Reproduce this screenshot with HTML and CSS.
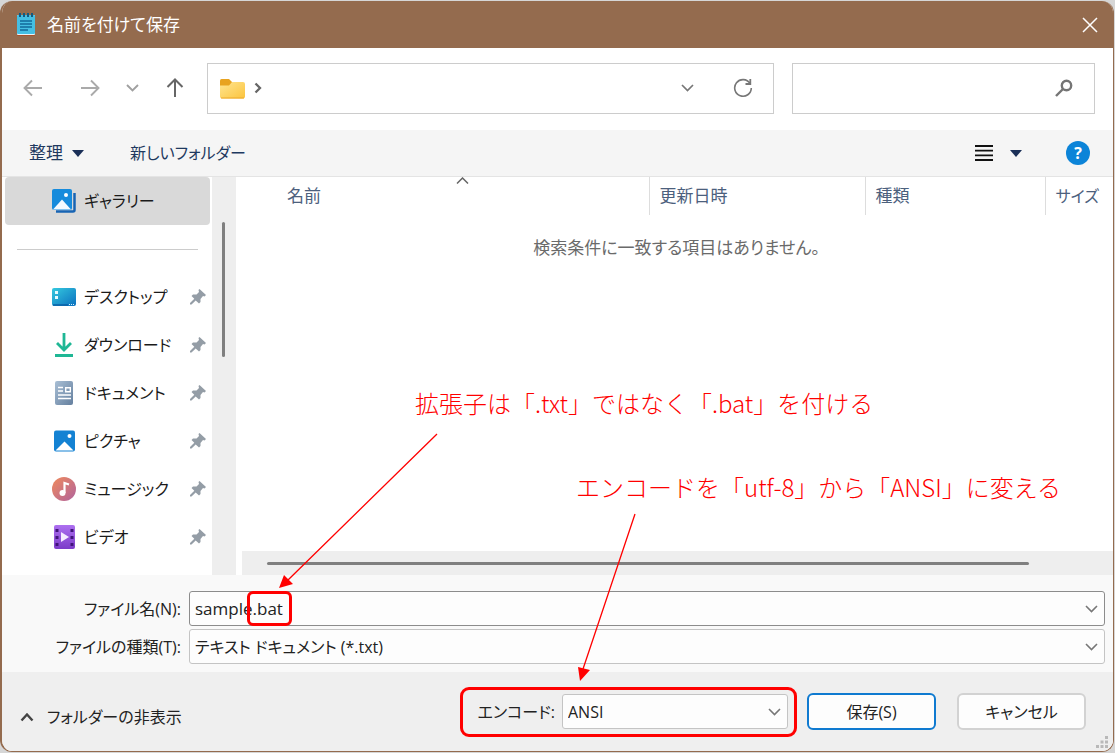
FILE: index.html
```html
<!DOCTYPE html>
<html lang="ja">

<head>
    <meta charset="UTF-8">
    <meta name="viewport" content="width=device-width, initial-scale=1.0">
    <title>名前を付けて保存</title>
    <link rel="stylesheet" href="styles.css">
</head>

<body>
    <div class="window">
        <header class="titlebar">
            <svg class="app-icon" width="20" height="24" viewBox="0 0 20 24">
                <rect x="1" y="2" width="18" height="21" rx="1" fill="#a8522c"/>
                <rect x="1" y="2" width="18" height="20" rx="1" fill="#e8f4f8"/>
                <rect x="1" y="2" width="18" height="19" rx="1" fill="#45bfe3"/>
                <path d="M4 0v4M8 0v4M12 0v4M16 0v4" stroke="#155a80" stroke-width="2"/>
                <path d="M4 8h12M4 11h12M4 14h12M4 17h8" stroke="#12699a" stroke-width="1.3"/>
            </svg>
            <h1>名前を付けて保存</h1>
            <button type="button" class="icon-btn close" aria-label="閉じる">
                <svg width="16" height="16" viewBox="0 0 16 16"><path d="M1 1l14 14M15 1L1 15" stroke="#fff" stroke-width="1.5" fill="none"/></svg>
            </button>
        </header>

        <nav class="navbar">
            <div class="nav-buttons">
                <button type="button" class="icon-btn" aria-label="戻る">
                    <svg width="20" height="18" viewBox="0 0 20 18"><path d="M19 9H1.500M9 1.500L1.500 9L9 16.500" stroke="#aaa" stroke-width="1.900" fill="none"/></svg>
                </button>
                <button type="button" class="icon-btn" aria-label="進む">
                    <svg width="20" height="18" viewBox="0 0 20 18"><path d="M1 9h17.500M11 1.500L18.500 9L11 16.500" stroke="#aaa" stroke-width="1.900" fill="none"/></svg>
                </button>
                <button type="button" class="icon-btn" aria-label="履歴">
                    <svg width="13" height="8" viewBox="0 0 13 8"><path d="M1 1l5.500 5.500L12 1" stroke="#a0a0a0" stroke-width="1.900" fill="none"/></svg>
                </button>
                <button type="button" class="icon-btn" aria-label="上へ">
                    <svg width="18" height="20" viewBox="0 0 18 20"><path d="M9 19V1.500M1.500 9L9 1.500L16.500 9" stroke="#666" stroke-width="2" fill="none"/></svg>
                </button>
            </div>
            <div class="address">
                <svg width="25" height="21" viewBox="0 0 25 21">
                    <defs>
                        <linearGradient id="folder" x1="0" y1="0" x2="1" y2="1"><stop offset="0" stop-color="#ffe591"/><stop offset="1" stop-color="#fbc43d"/></linearGradient>
                    </defs>
                    <path d="M0 2.500Q0 1 1.500 1H9L12 4V10H0z" fill="#e8a320"/>
                    <path d="M0 7.500H9L12 4H23Q25 4 25 6V18.500Q25 20.500 23 20.500H2Q0 20.500 0 18.500z" fill="url(#folder)"/>
                    <path d="M1 20h23" stroke="#eda82a"/>
                </svg>
                <svg width="8" height="12" viewBox="0 0 8 12"><path d="M1.500 1.500L6 6L1.500 10.500" stroke="#666" stroke-width="2.300" fill="none"/></svg>
                <span class="spacer"></span>
                <button type="button" class="icon-btn" aria-label="場所の一覧">
                    <svg width="13" height="8" viewBox="0 0 13 8"><path d="M1 1l5.500 5.500L12 1" stroke="#777" stroke-width="1.700" fill="none"/></svg>
                </button>
                <button type="button" class="icon-btn refresh" aria-label="更新">
                    <svg width="20" height="20" viewBox="0 0 20 20"><path d="M17 5.500A8.300 8.300 0 1 0 18.300 10" stroke="#777" stroke-width="1.600" fill="none"/><path d="M17.300 1V6H12.500" stroke="#777" stroke-width="1.800" fill="none"/></svg>
                </button>
            </div>
            <div class="search">
                <input type="search" aria-label="検索">
                <svg width="18" height="18" viewBox="0 0 18 18"><circle cx="11.500" cy="6.500" r="4.700" stroke="#757575" stroke-width="2.400" fill="none"/><path d="M8 10L1 17" stroke="#757575" stroke-width="2.400"/></svg>
            </div>
        </nav>

        <div class="toolbar">
            <button type="button" class="tool-btn">整理
                <svg width="12" height="7" viewBox="0 0 12 7"><path d="M0 0h12L6 7z" fill="#1a2f57"/></svg>
            </button>
            <button type="button" class="tool-btn new-folder">新しいフォルダー</button>
            <span class="spacer"></span>
            <button type="button" class="icon-btn view-btn" aria-label="表示方法">
                <svg width="18" height="18" viewBox="0 0 18 18"><path d="M0 2h18M0 6.700h18M0 11.300h18M0 16h18" stroke="#111" stroke-width="1.800"/></svg>
                <svg width="12" height="7" viewBox="0 0 12 7"><path d="M0 0h12L6 7z" fill="#1a2f57"/></svg>
            </button>
            <button type="button" class="help" aria-label="ヘルプ">?</button>
        </div>

        <main class="content">
            <aside class="sidebar">
                <a class="place selected" href="#">
                    <svg width="24" height="24" viewBox="0 0 24 24">
                        <path d="M22.500 4V21Q22.500 22.500 21 22.500H4" stroke="#1764b4" stroke-width="2.500" fill="none"/>
                        <rect width="20" height="21" rx="2" fill="#168bdc"/>
                        <path d="M1 20.500L10 10.500L19 20.500z" fill="#f4faff"/>
                        <circle cx="14" cy="6" r="2" fill="#fff"/>
                    </svg>
                    <span>ギャラリー</span>
                </a>
                <hr>
                <a class="place" href="#">
                    <svg width="24" height="24" viewBox="0 0 24 24">
                        <defs>
                            <linearGradient id="desk" x1="0" y1="0" x2="1" y2="1"><stop offset="0" stop-color="#35c9df"/><stop offset="1" stop-color="#0b70bf"/></linearGradient>
                        </defs>
                        <rect y="3" width="24" height="18" rx="2" fill="url(#desk)"/>
                        <path d="M3 6h3v3H3zM3 11h3v3H3z" fill="#e5fbff"/>
                        <path d="M1 20h15" stroke="#0a5fa6" stroke-width="1.500"/>
                        <path d="M17 19.500h5" stroke="#d0efff" stroke-dasharray="1 1"/>
                    </svg>
                    <span>デスクトップ</span>
                    <svg class="pin" width="16" height="16" viewBox="0 0 16 16"><path d="M9.500 0L16 6L14.500 7.500L13 7L10.500 10L10.500 13L9 14.500L5.700 11.500L1.500 15.500H0V14L4.300 9.800L1.500 7L3 5.500L6.500 5.500L9 3L8.500 1z" fill="#949da6"/></svg>
                </a>
                <a class="place" href="#">
                    <svg width="24" height="24" viewBox="0 0 24 24">
                        <path d="M12 0v17M5 10l7 7l7-7" stroke="#1fb795" stroke-width="2.800" fill="none"/>
                        <path d="M3 22.500h18" stroke="#1fb795" stroke-width="3"/>
                    </svg>
                    <span>ダウンロード</span>
                    <svg class="pin" width="16" height="16" viewBox="0 0 16 16"><path d="M9.500 0L16 6L14.500 7.500L13 7L10.500 10L10.500 13L9 14.500L5.700 11.500L1.500 15.500H0V14L4.300 9.800L1.500 7L3 5.500L6.500 5.500L9 3L8.500 1z" fill="#949da6"/></svg>
                </a>
                <a class="place" href="#">
                    <svg width="24" height="24" viewBox="0 0 24 24">
                        <defs>
                            <linearGradient id="doc" x1="0" y1="0" x2="1" y2="1"><stop offset="0" stop-color="#a9bfd5"/><stop offset="1" stop-color="#647f9e"/></linearGradient>
                        </defs>
                        <rect x="3" width="18" height="24" rx="2" fill="url(#doc)"/>
                        <path d="M6 6.500h5M6 10h5M6 14h13M6 17.500h13" stroke="#fff" stroke-width="1.500"/>
                        <path d="M13.700 6.700h4.600v4h-4.600z" stroke="#fff" stroke-width="1.400" fill="none"/>
                    </svg>
                    <span>ドキュメント</span>
                    <svg class="pin" width="16" height="16" viewBox="0 0 16 16"><path d="M9.500 0L16 6L14.500 7.500L13 7L10.500 10L10.500 13L9 14.500L5.700 11.500L1.500 15.500H0V14L4.300 9.800L1.500 7L3 5.500L6.500 5.500L9 3L8.500 1z" fill="#949da6"/></svg>
                </a>
                <a class="place" href="#">
                    <svg width="24" height="24" viewBox="0 0 24 24">
                        <rect x="2" y="1.500" width="21" height="21" rx="2" fill="#1482d3"/>
                        <path d="M3.500 21.500L12.500 12.500L21.500 21.500z" fill="#fff"/>
                        <circle cx="17.500" cy="7" r="2" fill="#fff"/>
                    </svg>
                    <span>ピクチャ</span>
                    <svg class="pin" width="16" height="16" viewBox="0 0 16 16"><path d="M9.500 0L16 6L14.500 7.500L13 7L10.500 10L10.500 13L9 14.500L5.700 11.500L1.500 15.500H0V14L4.300 9.800L1.500 7L3 5.500L6.500 5.500L9 3L8.500 1z" fill="#949da6"/></svg>
                </a>
                <a class="place" href="#">
                    <svg width="24" height="24" viewBox="0 0 24 24">
                        <defs>
                            <linearGradient id="music" x1="0" y1="0" x2="1" y2="1"><stop offset="0" stop-color="#f08a5b"/><stop offset="1" stop-color="#b0639e"/></linearGradient>
                        </defs>
                        <circle cx="12" cy="12" r="12" fill="url(#music)"/>
                        <circle cx="10.500" cy="16" r="3" fill="#fff"/>
                        <path d="M12.500 16V6L17 7.500" stroke="#fff" stroke-width="2.200" fill="none"/>
                    </svg>
                    <span>ミュージック</span>
                    <svg class="pin" width="16" height="16" viewBox="0 0 16 16"><path d="M9.500 0L16 6L14.500 7.500L13 7L10.500 10L10.500 13L9 14.500L5.700 11.500L1.500 15.500H0V14L4.300 9.800L1.500 7L3 5.500L6.500 5.500L9 3L8.500 1z" fill="#949da6"/></svg>
                </a>
                <a class="place" href="#">
                    <svg width="24" height="24" viewBox="0 0 24 24">
                        <defs>
                            <linearGradient id="video" x1="0" y1="0" x2="0" y2="1"><stop offset="0" stop-color="#ad70f0"/><stop offset="1" stop-color="#7c3bc9"/></linearGradient>
                        </defs>
                        <rect x="2" y="0" width="21" height="24" rx="2" fill="url(#video)"/>
                        <path d="M5 4v17M20 4v17" stroke="#40147a" stroke-width="3" stroke-dasharray="3 4"/>
                        <path d="M9 7L17 12L9 17z" fill="#f5eaff"/>
                    </svg>
                    <span>ビデオ</span>
                    <svg class="pin" width="16" height="16" viewBox="0 0 16 16"><path d="M9.500 0L16 6L14.500 7.500L13 7L10.500 10L10.500 13L9 14.500L5.700 11.500L1.500 15.500H0V14L4.300 9.800L1.500 7L3 5.500L6.500 5.500L9 3L8.500 1z" fill="#949da6"/></svg>
                </a>
            </aside>
            <div class="scroll-v"><div class="thumb"></div></div>

            <section class="files">
                <table>
                    <thead>
                        <tr>
                            <th class="col-name">名前
                                <svg class="sort" width="13" height="7" viewBox="0 0 13 7"><path d="M1 6.500L6.500 1L12 6.500" stroke="#666" stroke-width="1.500" fill="none"/></svg>
                            </th>
                            <th class="col-date">更新日時</th>
                            <th class="col-type">種類</th>
                            <th class="col-size">サイズ</th>
                        </tr>
                    </thead>
                    <tbody>
                        <tr>
                            <td colspan="4">検索条件に一致する項目はありません。</td>
                        </tr>
                    </tbody>
                </table>
                <div class="scroll-h"><div class="thumb"></div></div>
            </section>
        </main>

        <form class="fields">
            <label for="fileName">ファイル名(N):</label>
            <div class="combo">
                <input type="text" id="fileName" value="sample.bat">
                <svg class="chevron" width="13" height="8" viewBox="0 0 13 8"><path d="M1 1l5.500 5.500L12 1" stroke="#777" stroke-width="1.600" fill="none"/></svg>
                <span class="mark"></span>
            </div>
            <label for="fileType">ファイルの種類(T):</label>
            <div class="combo">
                <select id="fileType">
                    <option>テキスト ドキュメント (*.txt)</option>
                </select>
                <svg class="chevron" width="13" height="8" viewBox="0 0 13 8"><path d="M1 1l5.500 5.500L12 1" stroke="#777" stroke-width="1.600" fill="none"/></svg>
            </div>
        </form>

        <footer class="footer">
            <button type="button" class="toggle">
                <svg width="14" height="10" viewBox="0 0 14 10"><path d="M1.500 8.500L7 2.500L12.500 8.500" stroke="#444" stroke-width="2.400" fill="none"/></svg>
                フォルダーの非表示
            </button>
            <div class="encode">
                <label for="encode">エンコード:</label>
                <div class="combo">
                    <select id="encode">
                        <option>ANSI</option>
                    </select>
                    <svg class="chevron" width="13" height="8" viewBox="0 0 13 8"><path d="M1 1l5.500 5.500L12 1" stroke="#777" stroke-width="1.600" fill="none"/></svg>
                </div>
            </div>
            <button type="button" class="btn primary">保存(S)</button>
            <button type="button" class="btn">キャンセル</button>
            <svg class="grip" width="12" height="12" viewBox="0 0 12 12"><path d="M9 0h3v3H9zM9 4.500h3v3H9zM4.500 4.500h3v3h-3zM9 9h3v3H9zM4.500 9h3v3h-3zM0 9h3v3H0z" fill="#b9b9b9"/></svg>
        </footer>
    </div>

    <!-- notes and arrows over the dialog -->
    <svg class="arrows" width="1115" height="753" viewBox="0 0 1115 753">
        <path d="M437 434L288 580M635 514L583 669" stroke="#f00" stroke-width="1.300" fill="none"/>
        <path d="M279 588L284 575L293 584zM580 681L578 667L590 670z" fill="#f00"/>
    </svg>
    <p class="note note-ext">拡張子は「.txt」ではなく「.bat」を付ける</p>
    <p class="note note-enc">エンコードを「utf-8」から「ANSI」に変える</p>
</body>

</html>
```
FILE: styles.css
```css
* {
    box-sizing: border-box;
}

body {
    margin: 0;
    position: relative;
    padding: 1px 1px 1px 0;
    background: #d6d6d6;
    font-family: "Open Sans", "Noto Sans CJK JP", sans-serif;
    font-size: 17px;
    line-height: 24px;
    font-feature-settings: "palt";
    color: #222;
}

button, input, select {
    font: inherit;
    font-feature-settings: inherit;
    color: inherit;
}

svg {
    display: block;
    flex: none;
}

.window {
    display: flex;
    flex-direction: column;
    min-height: calc(100vh - 2px);
    border: 1px solid #946b4e;
    border-width: 0 1px 1px 2px;
    border-radius: 12px;
    background: #fff;
    overflow: hidden;
}

.spacer {
    flex: 1;
}

.icon-btn {
    display: flex;
    align-items: center;
    padding: 0;
    border: none;
    background: none;
}

/* title bar */
.titlebar {
    display: flex;
    align-items: center;
    height: 47px;
    padding: 0 15px 0 14px;
    background: #946b4e;
    color: #fff;
}

.titlebar h1 {
    flex: 1;
    margin: 0 0 0 11px;
    font-size: 17px;
    font-weight: normal;
}

/* navigation */
.navbar {
    display: flex;
    align-items: center;
    height: 82px;
    padding: 0 18px 2px 21px;
}

.nav-buttons {
    display: flex;
    align-items: center;
    justify-content: space-between;
    width: 161px;
    margin-right: 23px;
}

.nav-buttons .icon-btn:nth-child(2) {
    margin-left: 10px;
}

.address {
    flex: 1;
    display: flex;
    align-items: center;
    height: 51px;
    margin-right: 18px;
    padding: 0 20px 0 12px;
    border: 1px solid #ccc;
    gap: 9px;
}

.address .refresh {
    margin-left: 30px;
}

.search {
    display: flex;
    align-items: center;
    width: 303px;
    height: 51px;
    padding-right: 21px;
    border: 1px solid #ccc;
}

.search input {
    flex: 1;
    min-width: 0;
    height: 100%;
    border: none;
    outline: none;
    background: none;
}

/* toolbar */
.toolbar {
    display: flex;
    align-items: center;
    height: 47px;
    padding: 0 23px 0 27px;
    border-bottom: 1px solid #e4e4e4;
    background: #f5f5f5;
}

.tool-btn {
    display: flex;
    align-items: center;
    gap: 9px;
    margin-right: 46px;
    padding: 0;
    border: none;
    background: none;
    color: #1e3960;
}

.new-folder {
    font-size: 16px;
}

.view-btn {
    gap: 17px;
    margin-right: 44px;
}

.help {
    width: 24px;
    height: 24px;
    padding: 0;
    border: none;
    border-radius: 50%;
    background: #0c84d8;
    color: #fff;
    font-size: 16px;
    font-weight: bold;
    line-height: 24px;
}

/* places and file list */
.content {
    flex: 1;
    display: flex;
}

.sidebar {
    width: 210px;
    padding: 0 2px 0 3px;
}

.sidebar hr {
    margin: 24px 12px 23px 12px;
    border: none;
    border-top: 1px solid #ccc;
}

.place {
    display: flex;
    align-items: center;
    height: 48px;
    padding: 0 4px 0 47px;
    gap: 8px;
    border-radius: 4px;
    color: #1a1a1a;
    font-size: 16px;
    text-decoration: none;
}

.place.selected {
    background: #d9d9d9;
}

.place .pin {
    margin-left: auto;
}

.scroll-v {
    width: 24px;
    padding: 45px 10px 0;
    background: #eee;
}

.scroll-v .thumb {
    width: 3px;
    height: 135px;
    border-radius: 2px;
    background: #7f7f7f;
}

.files {
    flex: 1;
    display: flex;
    flex-direction: column;
    margin-left: 4px;
}

.files table {
    width: 100%;
    border-collapse: collapse;
    table-layout: fixed;
}

.files th {
    position: relative;
    height: 38px;
    padding: 0 0 0 10px;
    border-right: 1px solid #ddd;
    color: #4c607d;
    font-weight: normal;
    text-align: left;
}

.files .col-name {
    width: 409px;
    padding-left: 47px;
}

.files .col-date {
    width: 216px;
}

.files .col-type {
    width: 180px;
}

.files .col-size {
    border-right: none;
    font-size: 16px;
}

.sort {
    position: absolute;
    top: 0;
    left: 216px;
}

.files td {
    padding: 21px 0 0;
    color: #6a6a6a;
    text-align: center;
}

.scroll-h {
    height: 24px;
    margin: auto 0 0 2px;
    padding: 11px 84px 0 25px;
    background: #eee;
}

.scroll-h .thumb {
    height: 3px;
    border-radius: 2px;
    background: #7f7f7f;
}

/* file name and type */
.fields {
    display: grid;
    grid-template-columns: 179px 1fr;
    align-items: center;
    gap: 3px 8px;
    padding: 16px 8px 8px 0;
    background: #f9f9f9;
    font-size: 16px;
}

.fields label {
    text-align: right;
}

.combo {
    position: relative;
}

.combo input,
.combo select {
    display: block;
    width: 100%;
    height: 35px;
    padding: 0 5px;
    border: 1px solid #c4c4c4;
    border-radius: 3px;
    outline: none;
    background: #fdfdfd;
    appearance: none;
}

.combo input {
    border-color: #8c8c8c;
    font-size: 17px;
}

.chevron {
    position: absolute;
    top: 14px;
    right: 7px;
    pointer-events: none;
}

.mark {
    position: absolute;
    top: 0;
    left: 58px;
    width: 45px;
    height: 35px;
    border: 3px solid #f00;
    border-radius: 6px;
}

/* footer */
.footer {
    position: relative;
    display: flex;
    align-items: center;
    height: 79px;
    padding: 0 27px 0 18px;
    background: #efefef;
    font-size: 16px;
}

.toggle {
    display: flex;
    align-items: center;
    gap: 13px;
    padding: 10px 0 0;
    border: none;
    background: none;
}

.encode {
    display: flex;
    align-items: center;
    justify-content: flex-end;
    width: 337px;
    height: 50px;
    margin: 0 10px 0 auto;
    padding-right: 6px;
    gap: 7px;
    border: 3px solid #f00;
    border-radius: 9px;
}

.encode .combo {
    width: 226px;
}

.btn {
    width: 129px;
    height: 37px;
    padding: 0;
    border: 2px solid #d2d2d2;
    border-radius: 6px;
    background: #fdfdfd;
}

.btn.primary {
    margin-right: 21px;
    border-color: #0f7ad0;
}

.grip {
    position: absolute;
    right: 5px;
    bottom: 3px;
}

/* notes */
.arrows {
    position: absolute;
    top: 0;
    left: 0;
    pointer-events: none;
}

.note {
    position: absolute;
    margin: 0;
    color: #f00;
    font-family: "Noto Sans CJK JP", sans-serif;
    font-size: 24px;
    font-weight: 300;
    font-feature-settings: normal;
    line-height: 36px;
    white-space: nowrap;
}

.note-ext {
    top: 385px;
    left: 415px;
}

.note-enc {
    top: 469px;
    left: 576px;
}
```
